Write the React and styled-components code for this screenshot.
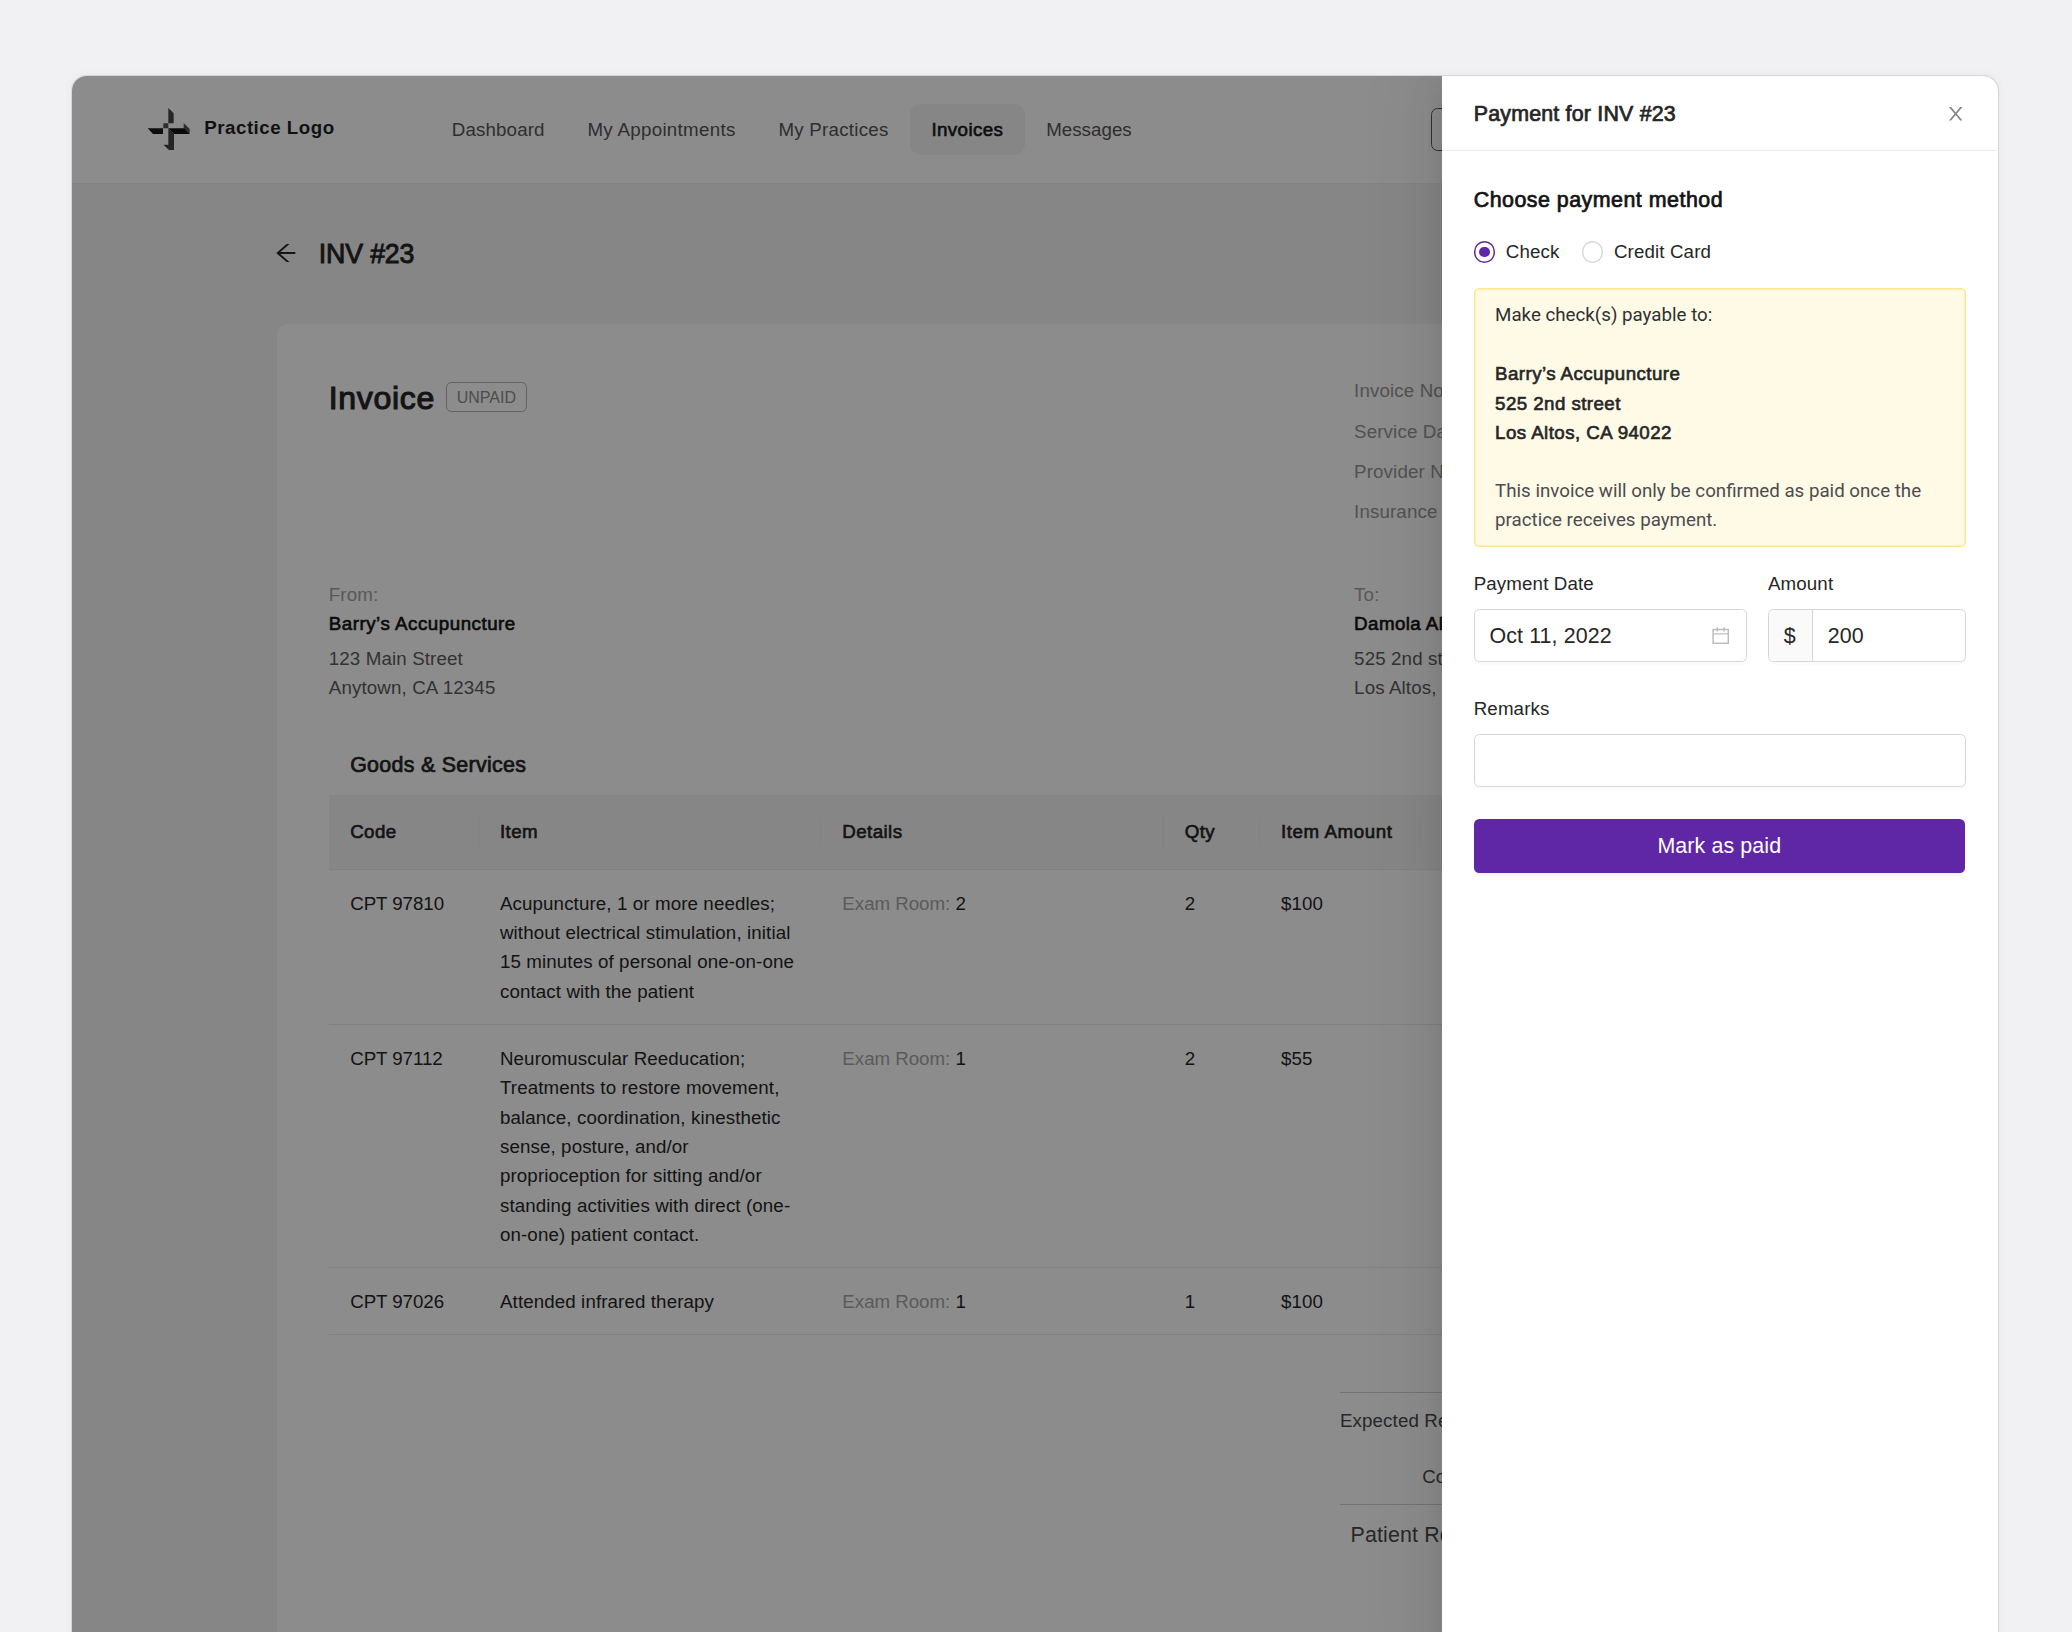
import React from "react";
import styled, { createGlobalStyle, css } from "styled-components";
import { AiOutlineArrowLeft, AiOutlineCalendar } from "react-icons/ai";

/* 1rem equals ten layout pixels of the 1440-wide design. */
const GlobalStyle = createGlobalStyle`
  *, *::before, *::after { box-sizing: border-box; }
  html { font-size: 13.375px; }
  body {
    margin: 0;
    background: #f1f1f4;
    font-family: "Liberation Sans", Arial, sans-serif;
    font-size: 1.4rem;
    line-height: 2.2rem;
    color: #262626;
    letter-spacing: 0.007em;
  }
`;

const medium = css`
  -webkit-text-stroke: 0.034em currentColor;
  letter-spacing: ${(p) => p.$ls ?? 0.023}em;
`;

const Stage = styled.div`
  height: 1632px;
  padding: 76px 74px 0 72px;
  overflow: hidden;
`;

const Window = styled.main`
  position: relative;
  height: 1600px;
  border-radius: 1.1rem;
  overflow: hidden;
  background: #f5f5f5;
`;

const WindowFrame = styled.div`
  border-radius: 1.1rem;
  box-shadow: 0 0 0 1px rgba(0, 0, 0, 0.09), 0 0 8px 2px rgba(0, 0, 0, 0.03);
`;

const TopBar = styled.header`
  display: flex;
  align-items: center;
  height: 8.06rem;
  padding: 0 5.6rem;
  background: #fff;
  border-bottom: 1px solid #f0f0f0;
`;

const Brand = styled.div`
  display: flex;
  align-items: center;
  gap: 1rem;
  width: 21.2rem;
`;

const LogoMark = styled.svg`
  width: 44px;
  height: 44px;
  flex: none;
`;

const BrandName = styled.span`
  margin-top: -0.2rem;
  font-weight: 700;
  color: #1f1f1f;
  letter-spacing: 0.027em;
  white-space: nowrap;
`;

const Nav = styled.nav`
  display: flex;
`;

const NavItem = styled.a`
  display: flex;
  align-items: center;
  height: 3.8rem;
  padding: 0.1rem 1.6rem 0;
  border-radius: 0.8rem;
  color: #555;
  white-space: nowrap;
  letter-spacing: ${(p) => p.$ls}em;
  ${(p) =>
    p.$active &&
    css`
      ${medium}
      background: #f5f5f5;
      color: #1a1a1a;
    `}
`;

const TopActions = styled.div`
  width: 36.8rem;
  margin-left: auto;
`;

const OutlineButton = styled.button`
  display: block;
  width: 16rem;
  height: 3.2rem;
  border: 1px solid #5c5c5c;
  border-radius: 0.5rem;
  background: transparent;
`;

const Page = styled.section`
  padding: 0 15.3rem;
`;

const PageHeading = styled.div`
  display: flex;
  align-items: center;
  gap: 1.45rem;
  height: 10.5rem;
`;

const BackIcon = styled(AiOutlineArrowLeft)`
  width: 1.95rem;
  height: 1.95rem;
  margin: 0 0 0.1rem -0.25rem;
`;

const PageTitle = styled.h1`
  ${medium}
  margin: 0;
  padding-top: 0.15rem;
  font-size: 2rem;
  line-height: 2.8rem;
  font-weight: 400;
`;

const Card = styled.article`
  min-height: 110rem;
  padding: 3.9rem;
  border-radius: 0.8rem;
  background: #fff;
`;

const Split = styled.div`
  display: grid;
  grid-template-columns: 76.66rem 1fr;
  margin-bottom: ${(p) => p.$after || 0};
`;

const InvoiceTitle = styled.div`
  display: flex;
  align-items: center;
  align-self: start;
  gap: 0.8rem;
  height: 3.2rem;
`;

const InvoiceName = styled.h2`
  ${medium}
  margin: 0;
  padding-top: 0.1rem;
  font-size: 2.4rem;
  font-weight: 400;
`;

const StatusTag = styled.span`
  height: 2.25rem;
  margin-top: -0.1rem;
  padding: 0 0.75rem;
  border: 1px solid #b5b5b5;
  border-radius: 0.4rem;
  font-size: 1.2rem;
  line-height: 2.1rem;
  letter-spacing: 0;
  color: #8c8c8c;
`;

const MetaList = styled.div`
  display: flex;
  flex-direction: column;
  gap: 0.8rem;
  padding-bottom: 0.8rem;
  color: #969696;
  white-space: nowrap;
`;

const Party = styled.address`
  font-style: normal;
  color: #5c5c5c;
  white-space: nowrap;
`;

const PartyLabel = styled.div`
  color: #a3a3a3;
`;

const PartyName = styled.div`
  ${medium}
  margin-bottom: 0.4rem;
  color: #141414;
`;

const SectionTitle = styled.h3`
  ${medium}
  margin: 0;
  padding: 3.44rem 1.6rem 1rem;
  font-size: 1.6rem;
  font-weight: 400;
  line-height: 2.44rem;
`;

const TableRow = styled.div`
  display: grid;
  grid-template-columns: 11.2rem 25.6rem 25.6rem 7.2rem 12rem 1fr;
  border-bottom: 1px solid #ececec;
`;

const TableHead = styled(TableRow)`
  height: 5.6rem;
  background: #f5f5f5;
`;

const HeadCell = styled.div`
  ${medium}
  display: flex;
  align-items: center;
  justify-content: space-between;
  padding-left: 1.6rem;
  white-space: nowrap;
`;

const ColumnRule = styled.span`
  width: 1px;
  height: 2.1rem;
  background: #ececec;
`;

const Cell = styled.div`
  padding: 1.42rem 1.6rem calc(1.38rem - 1px);
  letter-spacing: ${(p) => p.$ls ?? 0.002}em;
`;

const Muted = styled.span`
  color: #a6a6a6;
  letter-spacing: -0.002em;
`;

const Totals = styled.div`
  margin: 4.25rem 0 0 75.6rem;
`;

const TotalRow = styled.div`
  height: ${(p) => (p.$strong ? "4.6rem" : "4.2rem")};
  padding: ${(p) => (p.$strong ? "1.2rem" : "1rem")} 0 0 ${(p) => p.$indent || 0};
  border-top: 1px solid ${(p) => (p.$ruled ? "#d4d4d4" : "transparent")};
  font-size: ${(p) => (p.$strong ? "1.6rem" : "1.4rem")};
  color: #4a4a4a;
  white-space: nowrap;
`;

const Mask = styled.div`
  position: absolute;
  inset: 0;
  background: rgba(0, 0, 0, 0.45);
`;

const Drawer = styled.aside`
  position: absolute;
  top: 0;
  right: 0;
  bottom: 0;
  width: 41.6rem;
  background: #fff;
  box-shadow: -0.6rem 0 1.6rem -0.8rem rgba(0, 0, 0, 0.08),
    -0.9rem 0 2.8rem 0 rgba(0, 0, 0, 0.05), -1.2rem 0 4.8rem 1.6rem rgba(0, 0, 0, 0.03);
`;

const DrawerHeader = styled.div`
  display: flex;
  align-items: center;
  justify-content: space-between;
  height: 5.6rem;
  padding: 0.1rem 2.4rem 0;
  border-bottom: 1px solid #ebebeb;
`;

const DrawerTitle = styled.h2`
  ${medium}
  margin: 0;
  padding-top: 0.15rem;
  font-size: 1.6rem;
  font-weight: 400;
`;

const CloseGlyph = styled.svg`
  width: 1.6rem;
  height: 1.6rem;
  margin-top: 0.05rem;
  fill: #858585;
`;

const DrawerBody = styled.form`
  display: flex;
  flex-direction: column;
  padding: 2.47rem 2.4rem 2.4rem;
`;

const MethodTitle = styled.h3`
  ${medium}
  margin: 0 0 1.6rem;
  font-size: 1.6rem;
  font-weight: 400;
  line-height: 2.4rem;
  color: #141414;
`;

const RadioGroup = styled.div`
  display: flex;
  gap: 1.67rem;
  margin-bottom: 1.55rem;
`;

const RadioOption = styled.label`
  display: flex;
  align-items: center;
  gap: 0.8rem;
`;

const RadioRing = styled.span`
  display: grid;
  place-items: center;
  width: 1.6rem;
  height: 1.6rem;
  border-radius: 50%;
  box-shadow: inset 0 0 0 0.11rem ${(p) => (p.$checked ? "#5f27a5" : "#d9d9d9")};
`;

const RadioDot = styled.span`
  width: 0.8rem;
  height: 0.8rem;
  border-radius: 50%;
  background: #5f27a5;
`;

const Notice = styled.div`
  height: 19.4rem;
  padding: 0.97rem 1.6rem 0;
  margin-bottom: 1.64rem;
  border-radius: 0.4rem;
  background: #fffae6;
  box-shadow: inset 0 0 0 0.11rem #ffe58f;
`;

const NoticeText = styled.p`
  margin: 0;
  font-family: Roboto, sans-serif;
  letter-spacing: 0;
  color: ${(p) => (p.$soft ? "#4c4c4f" : "#303033")};
`;

const PayeeLines = styled.div`
  ${medium}
  margin: 2.2rem 0;
`;

const FieldRow = styled.div`
  display: grid;
  grid-template-columns: ${(p) => p.$columns};
  gap: 1.6rem;
  margin-bottom: 2.4rem;
`;

const Field = styled.label`
  display: flex;
  flex-direction: column;
  gap: 0.76rem;
`;

const InputBox = styled.span`
  display: flex;
  align-items: center;
  height: 4rem;
  border: 1px solid #d6d6d6;
  border-radius: 0.4rem;
  box-shadow: 0 0.2rem 0 rgba(0, 0, 0, 0.016);
  font-size: 1.6rem;
  overflow: hidden;
`;

const InputValue = styled.span`
  flex: 1;
  padding: 0.15rem 1.1rem 0;
`;

const Prefix = styled.span`
  display: grid;
  place-items: center;
  width: 3.3rem;
  align-self: stretch;
  border-right: 1px solid #d6d6d6;
  padding: 0.15rem 0.1rem 0 0;
  background: #fafafa;
`;

const CalendarIcon = styled(AiOutlineCalendar)`
  width: 1.6rem;
  height: 1.6rem;
  margin-right: 1.05rem;
  color: #bfbbbf;
`;

const PrimaryButton = styled.button`
  height: 4rem;
  margin-right: 1px;
  padding: 0.15rem 0 0;
  border: 0;
  border-radius: 0.4rem;
  background: #5f27a5;
  box-shadow: 0 0.2rem 0 rgba(0, 0, 0, 0.043);
  color: #fff;
  font: inherit;
  font-size: 1.6rem;
  letter-spacing: 0.005em;
`;

const navItems = [
  { label: "Dashboard", ls: 0.007 },
  { label: "My Appointments", ls: 0.0167 },
  { label: "My Practices", ls: 0.0135 },
  { label: "Invoices", ls: 0.022, active: true },
  { label: "Messages", ls: 0.002 },
];

const columns = ["Code", "Item", "Details", "Qty", "Item Amount"];

const services = [
  {
    code: "CPT 97810",
    item: ["Acupuncture, 1 or more needles;", "without electrical stimulation, initial", "15 minutes of personal one-on-one", "contact with the patient"],
    room: "2",
    qty: "2",
    amount: "$100",
  },
  {
    code: "CPT 97112",
    item: [
      "Neuromuscular Reeducation;",
      "Treatments to restore movement,",
      "balance, coordination, kinesthetic",
      "sense, posture, and/or",
      "proprioception for sitting and/or",
      "standing activities with direct (one-",
      "on-one) patient contact.",
    ],
    room: "1",
    qty: "2",
    amount: "$55",
  },
  { code: "CPT 97026", item: ["Attended infrared therapy"], room: "1", qty: "1", amount: "$100" },
];

const ItemLine = styled.div`
  white-space: nowrap;
`;

function Logo() {
  return (
    <LogoMark viewBox="0 0 132 132">
      <path fill="#1a1a1a" d="M2 64h46v17H18z" />
      <path fill="#555" d="M49 49h15v15H49z" />
      <path fill="#444" d="M64 3l16 16v30H64z" />
      <path fill="#555" d="M110 48l18 18v15l-18-17z" />
      <path fill="#444" d="M64 64l17 17v48H66L49 113h15z" />
      <path fill="#111" d="M64 64h47l17 17H81z" />
    </LogoMark>
  );
}

function CloseIcon() {
  return (
    <CloseGlyph viewBox="0 0 1024 1024">
      <path d="M563.8 512l262.5-312.9c4.4-5.2.7-13.1-6.1-13.1h-79.8c-4.7 0-9.2 2.1-12.3 5.7L511.6 449.8 295.1 191.7c-3-3.6-7.5-5.7-12.3-5.7H203c-6.8 0-10.5 7.9-6.1 13.1L459.4 512 196.9 824.9A7.95 7.95 0 0 0 203 838h79.8c4.7 0 9.2-2.1 12.3-5.7l216.5-258.1 216.5 258.1c3 3.6 7.5 5.7 12.3 5.7h79.8c6.8 0 10.5-7.9 6.1-13.1L563.8 512z" />
    </CloseGlyph>
  );
}

function InvoicePage() {
  return (
    <Page>
      <PageHeading>
        <BackIcon />
        <PageTitle $ls={-0.006}>INV #23</PageTitle>
      </PageHeading>
      <Card>
        <Split $after="3.2rem">
          <InvoiceTitle>
            <InvoiceName $ls={0.02}>Invoice</InvoiceName>
            <StatusTag>UNPAID</StatusTag>
          </InvoiceTitle>
          <MetaList>
            <span>Invoice No</span>
            <span>Service Date</span>
            <span>Provider Name</span>
            <span>Insurance</span>
          </MetaList>
        </Split>
        <Split>
          <Party>
            <PartyLabel>From:</PartyLabel>
            <PartyName $ls={0.028}>Barry’s Accupuncture</PartyName>
            <div>123 Main Street</div>
            <div>Anytown, CA 12345</div>
          </Party>
          <Party>
            <PartyLabel>To:</PartyLabel>
            <PartyName>Damola Alabi</PartyName>
            <div>525 2nd street</div>
            <div>Los Altos, CA 94022</div>
          </Party>
        </Split>
        <SectionTitle $ls={0.014}>Goods &amp; Services</SectionTitle>
        <TableHead>
          {columns.map((name) => (
            <HeadCell key={name} $ls={name === "Item Amount" ? 0.031 : 0.022}>
              {name}
              <ColumnRule />
            </HeadCell>
          ))}
        </TableHead>
        {services.map((row) => (
          <TableRow key={row.code}>
            <Cell $ls={-0.003}>{row.code}</Cell>
            <Cell $ls={0.006}>
              {row.item.map((line) => (
                <ItemLine key={line}>{line}</ItemLine>
              ))}
            </Cell>
            <Cell>
              <Muted>Exam Room:</Muted> {row.room}
            </Cell>
            <Cell>{row.qty}</Cell>
            <Cell>{row.amount}</Cell>
          </TableRow>
        ))}
        <Totals>
          <TotalRow $ruled>Expected Reimbursement</TotalRow>
          <TotalRow $indent="6.15rem">Copay</TotalRow>
          <TotalRow $ruled $strong $indent="0.8rem">
            Patient Responsibility
          </TotalRow>
        </Totals>
      </Card>
    </Page>
  );
}

function PaymentDrawer() {
  return (
    <Drawer>
      <DrawerHeader>
        <DrawerTitle $ls={0.009}>Payment for INV #23</DrawerTitle>
        <CloseIcon />
      </DrawerHeader>
      <DrawerBody>
        <MethodTitle $ls={0.023}>Choose payment method</MethodTitle>
        <RadioGroup>
          <RadioOption>
            <RadioRing $checked>
              <RadioDot />
            </RadioRing>
            Check
          </RadioOption>
          <RadioOption>
            <RadioRing />
            Credit Card
          </RadioOption>
        </RadioGroup>
        <Notice>
          <NoticeText>Make check(s) payable to:</NoticeText>
          <PayeeLines>
            <div>Barry’s Accupuncture</div>
            <div>525 2nd street</div>
            <div>Los Altos, CA 94022</div>
          </PayeeLines>
          <NoticeText $soft>This invoice will only be confirmed as paid once the practice receives payment.</NoticeText>
        </Notice>
        <FieldRow $columns="20.4rem 1fr">
          <Field>
            Payment Date
            <InputBox>
              <InputValue>Oct 11, 2022</InputValue>
              <CalendarIcon />
            </InputBox>
          </Field>
          <Field>
            Amount
            <InputBox>
              <Prefix>$</Prefix>
              <InputValue>200</InputValue>
            </InputBox>
          </Field>
        </FieldRow>
        <FieldRow $columns="1fr">
          <Field>
            Remarks
            <InputBox />
          </Field>
        </FieldRow>
        <PrimaryButton type="button">Mark as paid</PrimaryButton>
      </DrawerBody>
    </Drawer>
  );
}

export default function App() {
  return (
    <>
      <GlobalStyle />
      <Stage>
        <WindowFrame>
          <Window>
            <TopBar>
              <Brand>
                <Logo />
                <BrandName>Practice Logo</BrandName>
              </Brand>
              <Nav>
                {navItems.map((item) => (
                  <NavItem key={item.label} $active={item.active} $ls={item.ls}>
                    {item.label}
                  </NavItem>
                ))}
              </Nav>
              <TopActions>
                <OutlineButton aria-label="Account" />
              </TopActions>
            </TopBar>
            <InvoicePage />
            <Mask />
            <PaymentDrawer />
          </Window>
        </WindowFrame>
      </Stage>
    </>
  );
}
